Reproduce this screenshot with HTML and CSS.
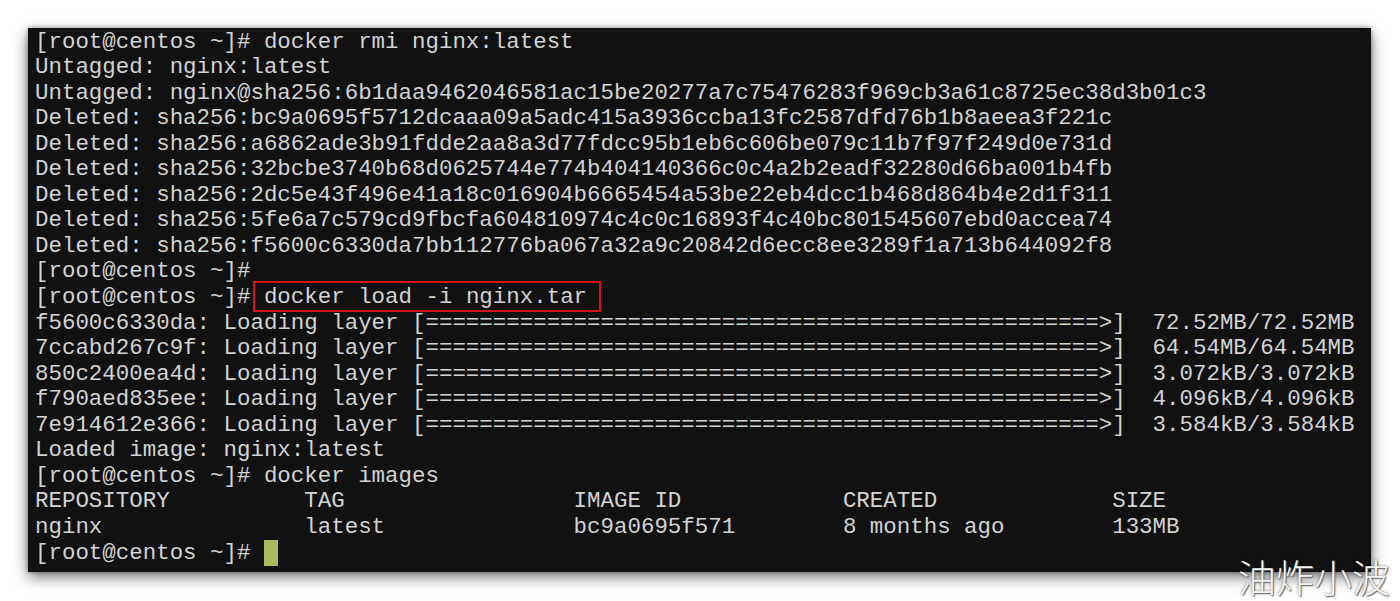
FILE: index.html
```html
<!DOCTYPE html>
<html>
<head>
<meta charset="utf-8">
<link rel="stylesheet" href="styles.css">
</head>
<body>
<div class="page">
<div class="term"><pre class="out">[root@centos ~]# docker rmi nginx:latest
Untagged: nginx:latest
Untagged: nginx@sha256:6b1daa9462046581ac15be20277a7c75476283f969cb3a61c8725ec38d3b01c3
Deleted: sha256:bc9a0695f5712dcaaa09a5adc415a3936ccba13fc2587dfd76b1b8aeea3f221c
Deleted: sha256:a6862ade3b91fdde2aa8a3d77fdcc95b1eb6c606be079c11b7f97f249d0e731d
Deleted: sha256:32bcbe3740b68d0625744e774b404140366c0c4a2b2eadf32280d66ba001b4fb
Deleted: sha256:2dc5e43f496e41a18c016904b6665454a53be22eb4dcc1b468d864b4e2d1f311
Deleted: sha256:5fe6a7c579cd9fbcfa604810974c4c0c16893f4c40bc801545607ebd0accea74
Deleted: sha256:f5600c6330da7bb112776ba067a32a9c20842d6ecc8ee3289f1a713b644092f8
[root@centos ~]#
[root@centos ~]# <span class="hl">docker load -i nginx.tar</span>
f5600c6330da: Loading layer [==================================================>]  72.52MB/72.52MB
7ccabd267c9f: Loading layer [==================================================>]  64.54MB/64.54MB
850c2400ea4d: Loading layer [==================================================>]  3.072kB/3.072kB
f790aed835ee: Loading layer [==================================================>]  4.096kB/4.096kB
7e914612e366: Loading layer [==================================================>]  3.584kB/3.584kB
Loaded image: nginx:latest
[root@centos ~]# docker images
REPOSITORY          TAG                 IMAGE ID            CREATED             SIZE
nginx               latest              bc9a0695f571        8 months ago        133MB
[root@centos ~]# <span class="cursor"></span></pre></div>
<div class="mark">油炸小波</div>
</div>
</body>
</html>
```
FILE: styles.css
```css
html, body {
  margin: 0;
  padding: 0;
  background: #ffffff;
}
.page {
  position: relative;
  width: 1400px;
  height: 601px;
  overflow: hidden;
  padding: 28px 0 0 28px;
  box-sizing: border-box;
}
.term {
  width: 1343px;
  height: 544px;
  background: #111111;
  box-shadow: 0 5px 14px rgba(0, 0, 0, 0.55), 0 0 4px rgba(0, 0, 0, 0.35);
  padding: 1.5px 0 0 7px;
  box-sizing: border-box;
  overflow: hidden;
}
.out {
  margin: 0;
  font-family: "Liberation Mono", "Courier New", monospace;
  font-size: 22.45px;
  line-height: 25.55px;
  color: #d3d3d3;
  white-space: pre;
}
.hl {
  position: relative;
}
.hl::after {
  content: "";
  position: absolute;
  left: -11px;
  right: -14px;
  top: -3px;
  bottom: -2px;
  border: 2px solid #d3141c;
}
.cursor {
  display: inline-block;
  width: 14px;
  height: 26px;
  background: #a9bb5c;
  vertical-align: -7px;
}
.mark {
  position: absolute;
  right: 10px;
  bottom: 3px;
  font-family: "Noto Sans CJK SC", sans-serif;
  font-weight: 300;
  font-size: 38px;
  line-height: 44px;
  color: #f4f4f4;
  text-shadow: 1px 1px 1px #6a6a6a, 0 0 3px rgba(0,0,0,0.5);
}
```
